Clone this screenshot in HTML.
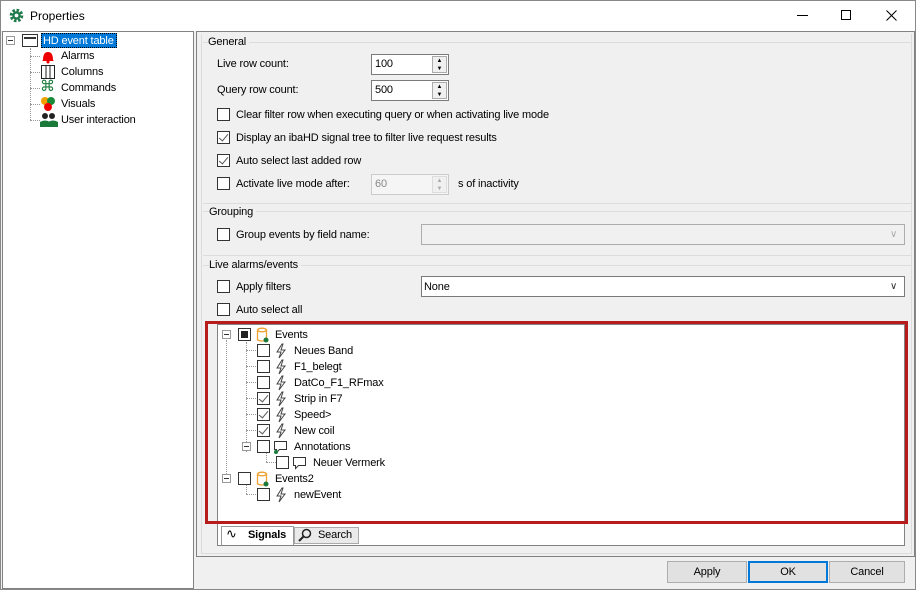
<!DOCTYPE html>
<html><head><style>
*{box-sizing:border-box;margin:0;padding:0}
body{width:916px;height:590px;position:relative;overflow:hidden;background:#f0f0f0;font-family:"Liberation Sans",sans-serif;font-size:11px;letter-spacing:-0.15px;color:#000}
.a{position:absolute}
.t{position:absolute;white-space:nowrap;line-height:14px}
.cb{position:absolute;width:13px;height:13px;border:1px solid #333;background:#fff}
.ck::after{content:"";position:absolute;left:3px;top:0px;width:4px;height:8px;border:solid #555;border-width:0 1.5px 1.5px 0;transform:rotate(40deg)}
.num{position:absolute;height:21px;border:1px solid #7a7a7a;background:#fff;padding:2px 3px;line-height:15px}
.spin{position:absolute;right:1px;top:1px;width:15px;height:17px;border:1px solid #aaa;background:#f0f0f0;font-size:6px;line-height:8px;text-align:center;letter-spacing:0}
.btn{position:absolute;height:22px;border:1px solid #adadad;background:#e1e1e1;text-align:center;line-height:20px}
.dot{position:absolute;border-color:#999;border-style:dotted;border-width:0}
.pm{position:absolute;width:9px;height:9px;border:1px solid #999;background:#fff}
.pm::after{content:"";position:absolute;left:1px;top:3px;width:5px;height:1px;background:#333}
</style></head><body>
<div class="a" style="left:0;top:0;width:916px;height:31px;background:#fff;border:1px solid #888;border-bottom:none"></div>
<svg class="a" style="left:9px;top:8px" width="15" height="15" viewBox="0 0 16 16"><circle cx="8" cy="8" r="5.5" fill="none" stroke="#1e7a4a" stroke-width="3.5" stroke-dasharray="2.6 1.7"/><circle cx="8" cy="8" r="4.5" fill="#1e7a4a"/><circle cx="8" cy="8" r="2" fill="#fff"/></svg>
<div class="t" style="left:30px;top:9px;font-size:12px;letter-spacing:0">Properties</div>
<div class="a" style="left:797px;top:15px;width:11px;height:1px;background:#000"></div>
<div class="a" style="left:841px;top:10px;width:10px;height:10px;border:1px solid #000"></div>
<svg class="a" style="left:886px;top:10px" width="11" height="11"><path d="M0.5 0.5L10.5 10.5M10.5 0.5L0.5 10.5" stroke="#000"/></svg>
<div class="a" style="left:0;top:30px;width:1px;height:560px;background:#888"></div>
<div class="a" style="left:915px;top:30px;width:1px;height:560px;background:#888"></div>
<div class="a" style="left:2px;top:31px;width:192px;height:558px;background:#fff;border:1px solid #828282"></div>
<div class="pm" style="left:6px;top:36px"></div>
<div class="a" style="left:22px;top:34px;width:16px;height:13px;border:1px solid #333;background:#fff"><div style="margin:2px 1px;height:2px;border-top:2px solid #333"></div></div>
<div class="a" style="left:41px;top:33px;width:76px;height:15px;background:#0078d7;border:1px dotted #000"></div>
<div class="t" style="left:43px;top:34px;color:#fff">HD event table</div>
<div class="dot" style="left:30px;top:48px;height:72px;border-left-width:1px"></div>
<div class="dot" style="left:30px;top:56px;width:10px;border-top-width:1px"></div>
<div class="dot" style="left:30px;top:72px;width:10px;border-top-width:1px"></div>
<div class="dot" style="left:30px;top:88px;width:10px;border-top-width:1px"></div>
<div class="dot" style="left:30px;top:104px;width:10px;border-top-width:1px"></div>
<div class="dot" style="left:30px;top:120px;width:10px;border-top-width:1px"></div>
<svg class="a" style="left:40px;top:48px" width="16" height="16"><path d="M3 12 Q3 4 8 4 Q13 4 13 12 L14 13 L2 13Z" fill="#e00"/><circle cx="8" cy="14" r="1.5" fill="#e00"/></svg>
<svg class="a" style="left:40px;top:64px" width="16" height="16"><rect x="1.5" y="1.5" width="13" height="13" fill="none" stroke="#222"/><path d="M6 2v12M10 2v12" stroke="#222"/></svg>
<div class="t" style="left:40px;top:80px;color:#1a7a3a;font-size:15px">⌘</div>
<svg class="a" style="left:40px;top:96px" width="16" height="16"><circle cx="5" cy="5" r="4" fill="#f0a000"/><circle cx="11" cy="5" r="4" fill="#1a8a3a"/><circle cx="8" cy="11" r="4" fill="#e00"/></svg>
<svg class="a" style="left:40px;top:112px" width="18" height="16"><circle cx="5" cy="4" r="3" fill="#222"/><circle cx="12" cy="4" r="3" fill="#222"/><path d="M0 15v-5q5-3 10 0v5z" fill="#1a7a3a"/><path d="M8 15v-5q5-3 10 0v5z" fill="#1a7a3a"/></svg>
<div class="t" style="left:61px;top:49px">Alarms</div>
<div class="t" style="left:61px;top:65px">Columns</div>
<div class="t" style="left:61px;top:81px">Commands</div>
<div class="t" style="left:61px;top:97px">Visuals</div>
<div class="t" style="left:61px;top:113px">User interaction</div>
<div class="a" style="left:196px;top:31px;width:719px;height:526px;border:1px solid #828282"></div>
<div class="a" style="left:201px;top:34px;width:711px;height:520px;border:1px solid #dcdcdc;border-top:none"></div>
<div class="a" style="left:196px;top:556px;width:720px;height:1px;background:#828282"></div>
<div class="a" style="left:203px;top:42px;width:709px;height:1px;background:#dcdcdc"></div>
<div class="t" style="left:208px;top:35px;background:#f0f0f0;padding-right:3px">General</div>
<div class="t" style="left:217px;top:57px">Live row count:</div>
<div class="num" style="left:371px;top:54px;width:78px">100<div class="spin">▲<br>▼</div></div>
<div class="t" style="left:217px;top:83px">Query row count:</div>
<div class="num" style="left:371px;top:80px;width:78px">500<div class="spin">▲<br>▼</div></div>
<div class="cb" style="left:217px;top:108px"></div><div class="t" style="left:236px;top:108px">Clear filter row when executing query or when activating live mode</div>
<div class="cb ck" style="left:217px;top:131px"></div><div class="t" style="left:236px;top:131px">Display an ibaHD signal tree to filter live request results</div>
<div class="cb ck" style="left:217px;top:154px"></div><div class="t" style="left:236px;top:154px">Auto select last added row</div>
<div class="cb" style="left:217px;top:177px"></div><div class="t" style="left:236px;top:177px">Activate live mode after:</div>
<div class="num" style="left:371px;top:174px;width:78px;border-color:#ccc;color:#888;background:#f5f5f5">60<div class="spin" style="border-color:#ddd;color:#aaa">▲<br>▼</div></div>
<div class="t" style="left:458px;top:177px">s of inactivity</div>
<div class="a" style="left:203px;top:203px;width:709px;height:1px;background:#dcdcdc"></div>
<div class="a" style="left:203px;top:211px;width:709px;height:1px;background:#dcdcdc"></div>
<div class="t" style="left:209px;top:205px;background:#f0f0f0;padding-right:3px">Grouping</div>
<div class="cb" style="left:217px;top:228px"></div><div class="t" style="left:236px;top:228px">Group events by field name:</div>
<div class="a" style="left:421px;top:224px;width:484px;height:21px;border:1px solid #adadad;background:#f0f0f0"></div>
<div class="t" style="left:890px;top:228px;color:#aaa;font-size:10px">∨</div>
<div class="a" style="left:203px;top:255px;width:709px;height:1px;background:#dcdcdc"></div>
<div class="a" style="left:203px;top:265px;width:709px;height:1px;background:#dcdcdc"></div>
<div class="t" style="left:209px;top:258px;background:#f0f0f0;padding-right:3px">Live alarms/events</div>
<div class="cb" style="left:217px;top:280px"></div><div class="t" style="left:236px;top:280px">Apply filters</div>
<div class="a" style="left:421px;top:276px;width:484px;height:21px;border:1px solid #7a7a7a;background:#fff;padding:3px 2px;line-height:14px">None</div>
<div class="t" style="left:890px;top:280px;color:#333;font-size:10px">∨</div>
<div class="cb" style="left:217px;top:303px"></div><div class="t" style="left:236px;top:303px">Auto select all</div>
<div class="a" style="left:217px;top:324px;width:688px;height:222px;background:#fff;border:1px solid #828282"></div>
<div class="a" style="left:221px;top:526px;width:73px;height:19px;background:#fff;border:1px solid #999;border-bottom:none"></div>
<div class="t" style="left:226px;top:527px;font-size:13px">∿</div>
<div class="t" style="left:248px;top:528px;font-weight:bold">Signals</div>
<div class="a" style="left:294px;top:527px;width:65px;height:17px;background:#eaeaea;border:1px solid #aaa"></div>
<svg class="a" style="left:298px;top:528px" width="14" height="14"><circle cx="8.5" cy="5.5" r="4" fill="none" stroke="#222" stroke-width="1.5"/><path d="M5.5 8.5L1 13" stroke="#222" stroke-width="2"/></svg>
<div class="t" style="left:318px;top:528px">Search</div>
<div class="dot" style="left:226px;top:340px;height:138px;border-left-width:1px"></div>
<div class="dot" style="left:246px;top:342px;height:110px;border-left-width:1px"></div>
<div class="dot" style="left:246px;top:484px;height:10px;border-left-width:1px"></div>
<div class="dot" style="left:266px;top:452px;height:10px;border-left-width:1px"></div>
<div class="dot" style="left:246px;top:494px;width:12px;border-top-width:1px"></div>
<div class="dot" style="left:266px;top:462px;width:10px;border-top-width:1px"></div>
<div class="pm" style="left:222px;top:330px"></div>
<div class="pm" style="left:242px;top:442px"></div>
<div class="pm" style="left:222px;top:474px"></div>
<div class="cb" style="left:238px;top:328px"><div style="position:absolute;left:2px;top:2px;width:7px;height:7px;background:#222"></div></div>
<div class="cb" style="left:238px;top:472px"></div>
<svg class="a" style="left:256px;top:327px" width="14" height="16"><path d="M1.5 3v10q4.5 2 9 0V3" fill="none" stroke="#f0a030" stroke-width="1.3"/><ellipse cx="6" cy="3" rx="4.5" ry="1.8" fill="none" stroke="#f0a030" stroke-width="1.3"/><circle cx="10" cy="13" r="2.5" fill="#1a7a3a"/></svg>
<svg class="a" style="left:256px;top:471px" width="14" height="16"><path d="M1.5 3v10q4.5 2 9 0V3" fill="none" stroke="#f0a030" stroke-width="1.3"/><ellipse cx="6" cy="3" rx="4.5" ry="1.8" fill="none" stroke="#f0a030" stroke-width="1.3"/><circle cx="10" cy="13" r="2.5" fill="#1a7a3a"/></svg>
<div class="t" style="left:275px;top:328px">Events</div>
<div class="t" style="left:275px;top:472px">Events2</div>
<div class="dot" style="left:246px;top:350px;width:12px;border-top-width:1px"></div>
<div class="dot" style="left:246px;top:366px;width:12px;border-top-width:1px"></div>
<div class="dot" style="left:246px;top:382px;width:12px;border-top-width:1px"></div>
<div class="dot" style="left:246px;top:398px;width:12px;border-top-width:1px"></div>
<div class="dot" style="left:246px;top:414px;width:12px;border-top-width:1px"></div>
<div class="dot" style="left:246px;top:430px;width:12px;border-top-width:1px"></div>
<div class="cb" style="left:257px;top:344px"></div>
<div class="cb" style="left:257px;top:360px"></div>
<div class="cb" style="left:257px;top:376px"></div>
<div class="cb ck" style="left:257px;top:392px"></div>
<div class="cb ck" style="left:257px;top:408px"></div>
<div class="cb ck" style="left:257px;top:424px"></div>
<div class="cb" style="left:257px;top:440px"></div>
<div class="cb" style="left:276px;top:456px"></div>
<div class="cb" style="left:257px;top:488px"></div>
<svg class="a" style="left:274px;top:343px" width="14" height="16"><path d="M8 1L3 9h4l-2 6 6-8H7l2-6z" fill="none" stroke="#444"/></svg>
<svg class="a" style="left:274px;top:359px" width="14" height="16"><path d="M8 1L3 9h4l-2 6 6-8H7l2-6z" fill="none" stroke="#444"/></svg>
<svg class="a" style="left:274px;top:375px" width="14" height="16"><path d="M8 1L3 9h4l-2 6 6-8H7l2-6z" fill="none" stroke="#444"/></svg>
<svg class="a" style="left:274px;top:391px" width="14" height="16"><path d="M8 1L3 9h4l-2 6 6-8H7l2-6z" fill="none" stroke="#444"/></svg>
<svg class="a" style="left:274px;top:407px" width="14" height="16"><path d="M8 1L3 9h4l-2 6 6-8H7l2-6z" fill="none" stroke="#444"/></svg>
<svg class="a" style="left:274px;top:423px" width="14" height="16"><path d="M8 1L3 9h4l-2 6 6-8H7l2-6z" fill="none" stroke="#444"/></svg>
<svg class="a" style="left:274px;top:487px" width="14" height="16"><path d="M8 1L3 9h4l-2 6 6-8H7l2-6z" fill="none" stroke="#444"/></svg>
<svg class="a" style="left:273px;top:439px" width="16" height="16"><path d="M1.5 2.5h12v8h-7l-3 3v-3h-2z" fill="none" stroke="#333"/><circle cx="3" cy="13" r="2" fill="#1a7a3a"/></svg>
<svg class="a" style="left:292px;top:455px" width="16" height="16"><path d="M1.5 2.5h12v8h-7l-3 3v-3h-2z" fill="none" stroke="#333"/></svg>
<div class="t" style="left:294px;top:344px">Neues Band</div>
<div class="t" style="left:294px;top:360px">F1_belegt</div>
<div class="t" style="left:294px;top:376px">DatCo_F1_RFmax</div>
<div class="t" style="left:294px;top:392px">Strip in F7</div>
<div class="t" style="left:294px;top:408px">Speed&gt;</div>
<div class="t" style="left:294px;top:424px">New coil</div>
<div class="t" style="left:294px;top:440px">Annotations</div>
<div class="t" style="left:313px;top:456px">Neuer Vermerk</div>
<div class="t" style="left:294px;top:488px">newEvent</div>
<div class="a" style="left:205px;top:321px;width:703px;height:203px;border:3px solid #b71c1c"></div>
<div class="btn" style="left:667px;top:561px;width:80px">Apply</div>
<div class="btn" style="left:748px;top:561px;width:80px;border:2px solid #0078d7;line-height:18px">OK</div>
<div class="btn" style="left:829px;top:561px;width:76px">Cancel</div>
<div class="a" style="left:0;top:589px;width:916px;height:1px;background:#888"></div>
</body></html>
